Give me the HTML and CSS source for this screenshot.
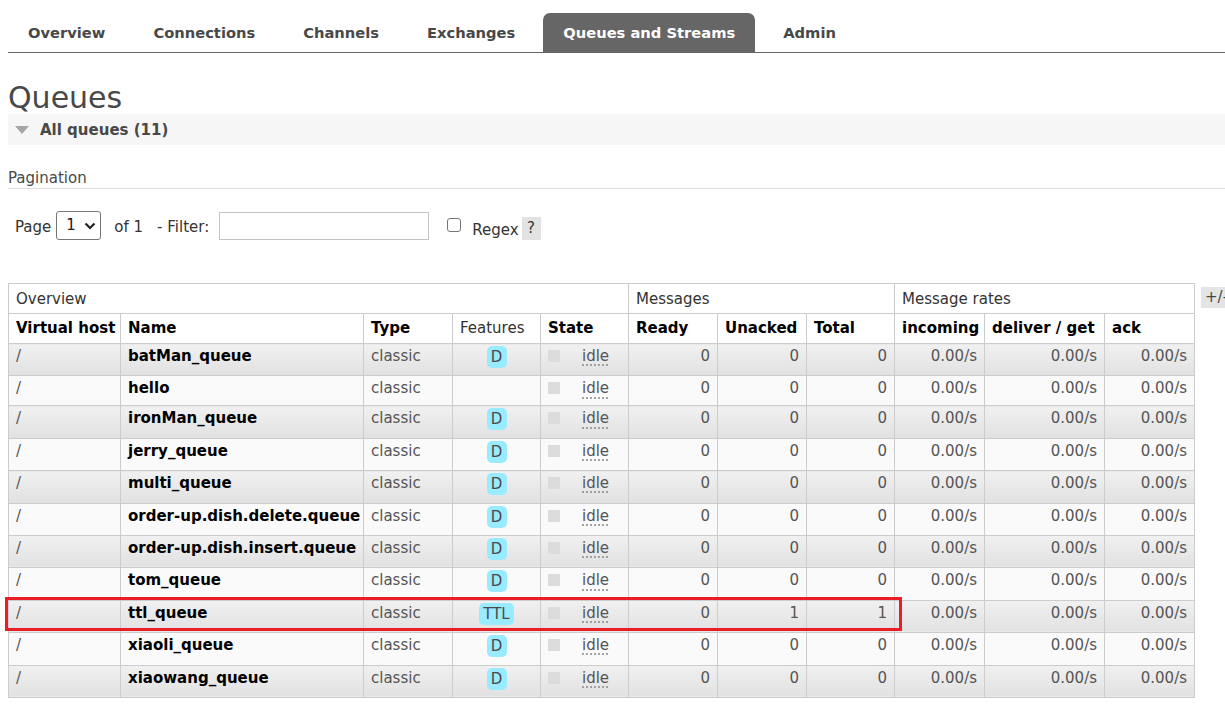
FILE: index.html
```html
<!DOCTYPE html>
<html>
<head>
<meta charset="utf-8">
<title>Queues</title>
<link rel="stylesheet" href="styles.css">
</head>
<body>
<ul class="tabs">
  <li>Overview</li>
  <li>Connections</li>
  <li>Channels</li>
  <li>Exchanges</li>
  <li class="active">Queues and Streams</li>
  <li>Admin</li>
</ul>
<h1 class="title">Queues</h1>
<div class="section-head"><span class="tri"></span>All queues (11)</div>
<div class="pag-label">Pagination</div>
<div class="pag-row">
  <span class="lbl lbl-page">Page</span>
  <div class="select"><span>1</span><svg class="chev" width="12" height="8" viewBox="0 0 12 8"><path d="M1.5 1.5 L6 6 L10.5 1.5" fill="none" stroke="#222" stroke-width="2.2"/></svg></div>
  <span class="lbl lbl-of">of 1</span>
  <span class="lbl lbl-filter">- Filter:</span>
  <div class="input"></div>
  <span class="cb"></span>
  <span class="lbl lbl-regex">Regex</span>
  <span class="help">?</span>
</div>
<div class="table-row">
  <div class="table-wrap">
    <table class="list">
      <colgroup>
        <col class="c-vh"><col class="c-name"><col class="c-type"><col class="c-feat"><col class="c-state">
        <col class="c-ready"><col class="c-unack"><col class="c-total">
        <col class="c-in"><col class="c-deliver"><col class="c-ack">
      </colgroup>
      <thead>
        <tr class="group">
          <th colspan="5">Overview</th>
          <th colspan="3">Messages</th>
          <th colspan="3">Message rates</th>
        </tr>
        <tr class="cols">
          <th>Virtual host</th><th>Name</th><th>Type</th><th class="plain">Features</th><th>State</th>
          <th>Ready</th><th>Unacked</th><th>Total</th>
          <th>incoming</th><th>deliver / get</th><th>ack</th>
        </tr>
      </thead>
      <tbody>
        <tr class="alt1"><td>/</td><td class="name">batMan_queue</td><td>classic</td><td class="feat"><span class="badge">D</span></td><td class="state"><span class="sq"></span><abbr class="idle">idle</abbr></td><td class="num">0</td><td class="num">0</td><td class="num">0</td><td class="num">0.00/s</td><td class="num">0.00/s</td><td class="num">0.00/s</td></tr>
        <tr class="alt2"><td>/</td><td class="name">hello</td><td>classic</td><td class="feat"></td><td class="state"><span class="sq"></span><abbr class="idle">idle</abbr></td><td class="num">0</td><td class="num">0</td><td class="num">0</td><td class="num">0.00/s</td><td class="num">0.00/s</td><td class="num">0.00/s</td></tr>
        <tr class="alt1"><td>/</td><td class="name">ironMan_queue</td><td>classic</td><td class="feat"><span class="badge">D</span></td><td class="state"><span class="sq"></span><abbr class="idle">idle</abbr></td><td class="num">0</td><td class="num">0</td><td class="num">0</td><td class="num">0.00/s</td><td class="num">0.00/s</td><td class="num">0.00/s</td></tr>
        <tr class="alt2"><td>/</td><td class="name">jerry_queue</td><td>classic</td><td class="feat"><span class="badge">D</span></td><td class="state"><span class="sq"></span><abbr class="idle">idle</abbr></td><td class="num">0</td><td class="num">0</td><td class="num">0</td><td class="num">0.00/s</td><td class="num">0.00/s</td><td class="num">0.00/s</td></tr>
        <tr class="alt1"><td>/</td><td class="name">multi_queue</td><td>classic</td><td class="feat"><span class="badge">D</span></td><td class="state"><span class="sq"></span><abbr class="idle">idle</abbr></td><td class="num">0</td><td class="num">0</td><td class="num">0</td><td class="num">0.00/s</td><td class="num">0.00/s</td><td class="num">0.00/s</td></tr>
        <tr class="alt2"><td>/</td><td class="name">order-up.dish.delete.queue</td><td>classic</td><td class="feat"><span class="badge">D</span></td><td class="state"><span class="sq"></span><abbr class="idle">idle</abbr></td><td class="num">0</td><td class="num">0</td><td class="num">0</td><td class="num">0.00/s</td><td class="num">0.00/s</td><td class="num">0.00/s</td></tr>
        <tr class="alt1"><td>/</td><td class="name">order-up.dish.insert.queue</td><td>classic</td><td class="feat"><span class="badge">D</span></td><td class="state"><span class="sq"></span><abbr class="idle">idle</abbr></td><td class="num">0</td><td class="num">0</td><td class="num">0</td><td class="num">0.00/s</td><td class="num">0.00/s</td><td class="num">0.00/s</td></tr>
        <tr class="alt2"><td>/</td><td class="name">tom_queue</td><td>classic</td><td class="feat"><span class="badge">D</span></td><td class="state"><span class="sq"></span><abbr class="idle">idle</abbr></td><td class="num">0</td><td class="num">0</td><td class="num">0</td><td class="num">0.00/s</td><td class="num">0.00/s</td><td class="num">0.00/s</td></tr>
        <tr class="alt1"><td>/</td><td class="name">ttl_queue</td><td>classic</td><td class="feat"><span class="badge">TTL</span></td><td class="state"><span class="sq"></span><abbr class="idle">idle</abbr></td><td class="num">0</td><td class="num">1</td><td class="num">1</td><td class="num">0.00/s</td><td class="num">0.00/s</td><td class="num">0.00/s</td></tr>
        <tr class="alt2"><td>/</td><td class="name">xiaoli_queue</td><td>classic</td><td class="feat"><span class="badge">D</span></td><td class="state"><span class="sq"></span><abbr class="idle">idle</abbr></td><td class="num">0</td><td class="num">0</td><td class="num">0</td><td class="num">0.00/s</td><td class="num">0.00/s</td><td class="num">0.00/s</td></tr>
        <tr class="alt1"><td>/</td><td class="name">xiaowang_queue</td><td>classic</td><td class="feat"><span class="badge">D</span></td><td class="state"><span class="sq"></span><abbr class="idle">idle</abbr></td><td class="num">0</td><td class="num">0</td><td class="num">0</td><td class="num">0.00/s</td><td class="num">0.00/s</td><td class="num">0.00/s</td></tr>
      </tbody>
    </table>
    <div class="highlight"></div>
  </div>
  <span class="toggle">+/-</span>
</div>
</body>
</html>
```
FILE: styles.css
```css
html {
  overflow: hidden;
}
body {
  margin: 0;
  padding: 0 0 0 8px;
  font-family: "DejaVu Sans", Verdana, sans-serif;
  font-size: 15px;
  line-height: 19px;
  color: #484848;
  background: #fff;
}

/* Tabs */
.tabs {
  list-style: none;
  margin: 13px 0 0 0;
  padding: 0;
  display: flex;
  gap: 8px;
  border-bottom: 1px solid #666;
}
.tabs li {
  padding: 10px 20px;
  font-size: 14.7px;
  line-height: 19px;
  font-weight: bold;
  color: #484848;
  border-radius: 7px 7px 0 0;
  white-space: nowrap;
}
.tabs li.active {
  background: #666;
  color: #fff;
}

/* Title */
.title {
  margin: 30px 0 2px 0;
  font-size: 30px;
  line-height: 29px;
  font-weight: normal;
  color: #484848;
}

.section-head {
  height: 31px;
  box-sizing: border-box;
  padding: 2px 0 0 7px;
  display: flex;
  align-items: center;
  background: #f6f6f6;
  font-weight: bold;
  color: #484848;
}
.tri {
  width: 0;
  height: 0;
  border-left: 7px solid transparent;
  border-right: 7px solid transparent;
  border-top: 8px solid #a6a6a6;
  margin-right: 11px;
  margin-top: -1px;
}

.pag-label {
  margin-top: 24px;
  padding-bottom: 0;
  border-bottom: 1px solid #ddd;
}

.pag-row {
  margin-top: 22px;
  height: 29px;
  display: flex;
  align-items: center;
  padding-left: 7px;
  color: #333;
}
.lbl {
  margin-top: 4px;
}
.select {
  margin-left: 5px;
  width: 45px;
  height: 29px;
  box-sizing: border-box;
  border: 1px solid #767676;
  border-radius: 3px;
  display: flex;
  align-items: center;
  padding-left: 9px;
  gap: 8px;
  color: #222;
}
.lbl-of {
  margin-left: 13px;
}
.lbl-filter {
  margin-left: 14px;
}
.input {
  margin-left: 10px;
  width: 210px;
  height: 28px;
  box-sizing: border-box;
  border: 1px solid #c4c4c4;
  background: #fff;
}
.cb {
  margin-left: 18px;
  width: 14px;
  height: 14px;
  box-sizing: border-box;
  border: 1px solid #767676;
  border-radius: 3px;
  margin-top: -2px;
}
.lbl-regex {
  margin-left: 11px;
  margin-top: 9px;
}
.help {
  margin-left: 3px;
  margin-top: 6px;
  width: 19px;
  height: 23px;
  background: #e2e2e2;
  display: flex;
  align-items: center;
  justify-content: center;
}

/* Table */
.table-row {
  margin-top: 43px;
  display: flex;
  align-items: flex-start;
  gap: 6px;
}
.table-wrap {
  position: relative;
  flex-shrink: 0;
}
.list {
  border-collapse: collapse;
  table-layout: fixed;
  width: 1187px;
}
.c-vh { width: 112px; }
.c-name { width: 243px; }
.c-type { width: 89px; }
.c-feat { width: 88px; }
.c-state { width: 88px; }
.c-ready { width: 89px; }
.c-unack { width: 89px; }
.c-total { width: 88px; }
.c-in { width: 90px; }
.c-deliver { width: 120px; }
.c-ack { width: 90px; }

.list th,
.list td {
  border: 1px solid #ccc;
  padding: 3px 7px 7px 7px;
  text-align: left;
  vertical-align: top;
  white-space: nowrap;
  overflow: visible;
}
.list th {
  background: #fff;
  color: #000;
  padding: 5px 7px 5px 7px;
}
.list tr.group th {
  font-weight: normal;
  color: #333;
  padding-top: 6px;
  padding-bottom: 4px;
}
.list tr.cols th {
  font-weight: bold;
}
.list tr.cols th.plain {
  font-weight: normal;
  color: #333;
}
.list td {
  color: #555;
}
.list tr.alt1 td {
  background: linear-gradient(to bottom, #f1f1f1, #e1e1e1);
}
.list tr.alt2 td {
  background: #fafafa;
}
.list td.name {
  font-weight: bold;
  color: #000;
}
.list td.num {
  text-align: right;
}
.list td.feat {
  text-align: center;
  padding-top: 2px;
  padding-bottom: 7.4px;
}
.badge {
  display: inline-block;
  height: 22px;
  line-height: 22px;
  padding: 0 4px;
  background: #99ebff;
  border-radius: 5px;
  color: #4a4a4a;
  vertical-align: top;
  min-width: 12px;
}
.sq {
  display: inline-block;
  width: 12px;
  height: 12px;
  background: #dcdcdc;
  margin-right: 22px;
  vertical-align: -1px;
}
.idle {
  text-decoration: underline dotted #888;
  text-underline-offset: 4px;
  color: #555;
}

.highlight {
  position: absolute;
  left: -3px;
  top: 314px;
  width: 897px;
  height: 34px;
  box-sizing: border-box;
  border: 3px solid #e81f27;
  pointer-events: none;
}

.toggle {
  flex-shrink: 0;
  margin-top: 4px;
  height: 21px;
  line-height: 21px;
  padding: 0 4px;
  background: #e4e4e4;
  color: #484848;
  white-space: nowrap;
}
```
